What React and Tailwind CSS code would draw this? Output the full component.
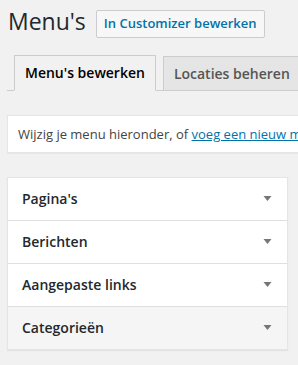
const sections = ["Pagina's", "Berichten", "Aangepaste links", "Categorieën"];

const Arrow = () => (
    <svg width="9" height="5" viewBox="0 0 9 5" className="shrink-0">
        <path d="M0.5 0 L8.5 0 L4.5 5 Z" fill="#72777c" />
    </svg>
);

export default function App() {
    return (
        <div className="min-h-screen w-full overflow-hidden bg-[#f1f1f1] pl-[7px] font-['Open_Sans',sans-serif] text-[#444]">
            {/* header */}
            <div className="flex items-start pt-[7px]">
                <h1 className="text-[23px] leading-[29px] font-normal text-[#23282d] pl-px">Menu's</h1>
                <button className="ml-[10px] mt-[3px] h-[28px] px-[7px] border border-[#ccc] bg-[#f7f7f7] rounded-[2px] text-[13px] font-semibold text-[#0073aa] whitespace-nowrap">
                    In Customizer bewerken
                </button>
            </div>

            {/* tabs */}
            <div className="mt-[17px] flex items-end border-b border-[#ccc] w-[400px]">
                <div className="ml-[7px] -mb-px shrink-0 border border-[#ccc] border-b-[#f1f1f1] bg-[#f1f1f1] px-[10px] pt-[5px] pb-[5px] text-[14px] leading-[24px] font-semibold text-black whitespace-nowrap">
                    Menu's bewerken
                </div>
                <div className="ml-[7px] shrink-0 border border-b-0 border-[#ccc] bg-[#e5e5e5] px-[10px] pt-[5px] pb-[4px] text-[14px] leading-[24px] font-semibold text-[#555] whitespace-nowrap">
                    Locaties beheren
                </div>
            </div>

            {/* notice */}
            <div className="mt-[24px] w-[500px] border border-[#e5e5e5] bg-white px-[10px] py-[10px] text-[13px] leading-[16px] whitespace-nowrap shadow-[0_1px_1px_rgba(0,0,0,0.04)]">
                Wijzig je menu hieronder, of{" "}
                <a className="text-[#0073aa] underline">voeg een nieuw menu toe</a>.
            </div>

            {/* accordion */}
            <div className="mt-[24px] w-[281px] border border-[#e5e5e5] bg-white shadow-[0_1px_1px_rgba(0,0,0,0.06)]">
                {sections.map((title, i) => (
                    <div
                        key={title}
                        className={`flex items-center justify-between pl-[14px] pr-[15px] pt-[10px] pb-[11px] text-[14px] leading-[21px] font-semibold text-[#23282d] ${i < sections.length - 1 ? "border-b border-[#dfdfdf]" : "bg-[#f5f5f5]"}`}
                    >
                        <span>{title}</span>
                        <Arrow />
                    </div>
                ))}
            </div>
        </div>
    );
}
